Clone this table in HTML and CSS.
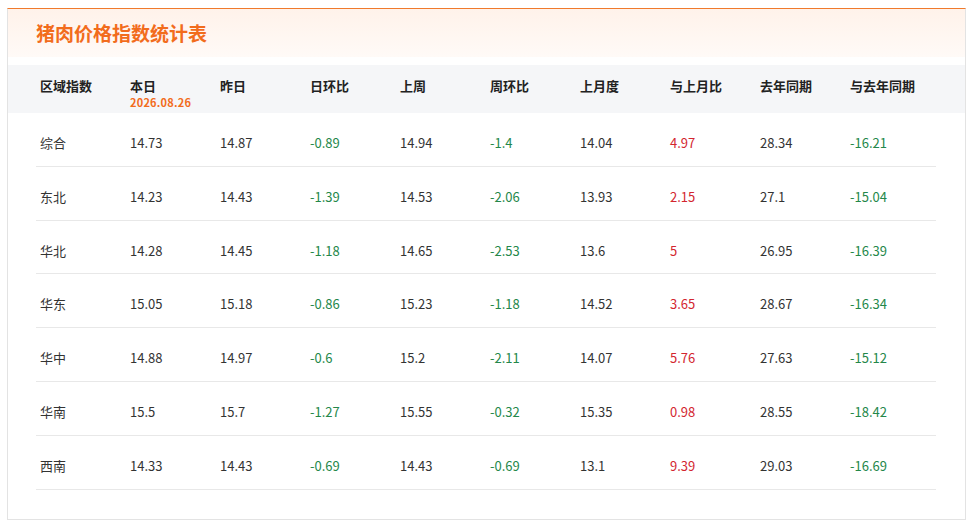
FILE: index.html
```html
<!DOCTYPE html>
<html lang="zh-CN">
<head>
<meta charset="utf-8">
<title>猪肉价格指数统计表</title>
<link rel="stylesheet" href="styles.css">
</head>
<body>
<div class="card">
  <div class="title-bar">猪肉价格指数统计表</div>
  <div class="thead">
    <div class="grid">
      <div class="th">区域指数</div>
      <div class="th">本日<span class="date">2026.08.26</span></div>
      <div class="th">昨日</div>
      <div class="th">日环比</div>
      <div class="th">上周</div>
      <div class="th">周环比</div>
      <div class="th">上月度</div>
      <div class="th">与上月比</div>
      <div class="th">去年同期</div>
      <div class="th">与去年同期</div>
    </div>
  </div>
  <div class="tbody">
    <div class="grid row"><div>综合</div><div>14.73</div><div>14.87</div><div class="down">-0.89</div><div>14.94</div><div class="down">-1.4</div><div>14.04</div><div class="up">4.97</div><div>28.34</div><div class="down">-16.21</div></div>
    <div class="grid row"><div>东北</div><div>14.23</div><div>14.43</div><div class="down">-1.39</div><div>14.53</div><div class="down">-2.06</div><div>13.93</div><div class="up">2.15</div><div>27.1</div><div class="down">-15.04</div></div>
    <div class="grid row"><div>华北</div><div>14.28</div><div>14.45</div><div class="down">-1.18</div><div>14.65</div><div class="down">-2.53</div><div>13.6</div><div class="up">5</div><div>26.95</div><div class="down">-16.39</div></div>
    <div class="grid row"><div>华东</div><div>15.05</div><div>15.18</div><div class="down">-0.86</div><div>15.23</div><div class="down">-1.18</div><div>14.52</div><div class="up">3.65</div><div>28.67</div><div class="down">-16.34</div></div>
    <div class="grid row"><div>华中</div><div>14.88</div><div>14.97</div><div class="down">-0.6</div><div>15.2</div><div class="down">-2.11</div><div>14.07</div><div class="up">5.76</div><div>27.63</div><div class="down">-15.12</div></div>
    <div class="grid row"><div>华南</div><div>15.5</div><div>15.7</div><div class="down">-1.27</div><div>15.55</div><div class="down">-0.32</div><div>15.35</div><div class="up">0.98</div><div>28.55</div><div class="down">-18.42</div></div>
    <div class="grid row"><div>西南</div><div>14.33</div><div>14.43</div><div class="down">-0.69</div><div>14.43</div><div class="down">-0.69</div><div>13.1</div><div class="up">9.39</div><div>29.03</div><div class="down">-16.69</div></div>
  </div>
</div>
</body>
</html>
```
FILE: styles.css
```css
html, body {
  margin: 0;
  padding: 0;
  background: #ffffff;
}
body {
  font-family: "Noto Sans CJK SC", "Noto Sans", sans-serif;
  color: #333333;
  font-size: 13px;
  padding: 8px 0 0 7px;
}
.card {
  width: 957px;
  height: 510px;
  border: 1px solid #e3e3e3;
  border-top: 1px solid #f07a2c;
}
.title-bar {
  height: 48px;
  line-height: 48px;
  padding-left: 28px;
  font-size: 19px;
  font-weight: 700;
  color: #f26c1c;
  background: linear-gradient(180deg, #fff2ea 0%, #fffaf7 100%);
}
.thead {
  margin-top: 8px;
  height: 48px;
  background: #f5f6f8;
  padding: 0 28px;
}
.grid {
  display: grid;
  grid-template-columns: repeat(10, 90px);
  width: 900px;
}
.th {
  padding: 12px 0 0 4px;
  font-weight: 700;
  color: #222222;
  line-height: 18px;
}
.date {
  display: block;
  font-size: 11px;
  line-height: 14px;
  color: #f26c1c;
  letter-spacing: 0.2px;
}
.tbody {
  padding: 0 28px;
}
.row {
  height: 52.8px;
  border-bottom: 1px solid #e8e8e8;
}
.row > div {
  padding: 20px 0 0 4px;
  line-height: 20px;
}
.down { color: #24874a; }
.up { color: #d3262f; }
```
